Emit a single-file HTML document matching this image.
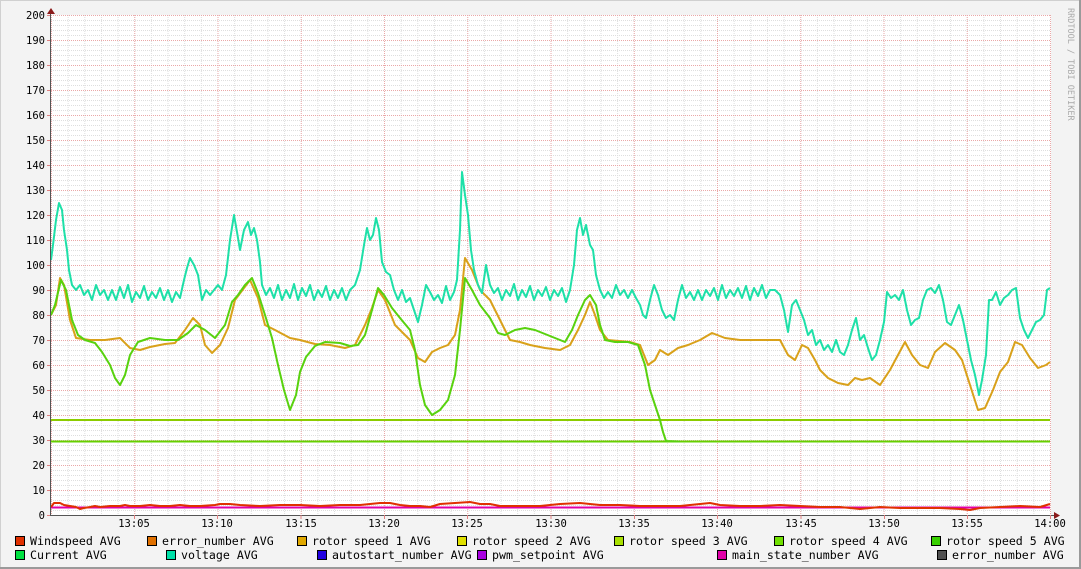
<!DOCTYPE html>
<html><head><meta charset="utf-8"><style>
html,body{margin:0;padding:0;background:#f3f3f3}
svg{display:block}
text{font-family:"DejaVu Sans Mono","Liberation Mono",monospace;fill:#000}
</style></head><body>
<svg width="1081" height="569" viewBox="0 0 1081 569" xmlns="http://www.w3.org/2000/svg">
<defs>
<pattern id="hmin" x="51" y="15" width="2" height="5" patternUnits="userSpaceOnUse"><rect x="0" y="0" width="1" height="1" fill="#dedede"/></pattern>
<pattern id="vmin" x="51" y="15" width="16.65" height="2" patternUnits="userSpaceOnUse"><rect x="0" y="0" width="1" height="1" fill="#dedede"/></pattern>
<pattern id="hmaj" x="51" y="15" width="2" height="25" patternUnits="userSpaceOnUse"><rect x="0" y="0" width="1" height="1" fill="#eaa8a8"/></pattern>
<pattern id="vmaj" x="51" y="15" width="83.25" height="2" patternUnits="userSpaceOnUse"><rect x="0" y="0" width="1" height="1" fill="#eaa8a8"/></pattern>
</defs>
<rect x="0" y="0" width="1081" height="569" fill="#f3f3f3"/>
<rect x="0.5" y="0.5" width="1080" height="568" fill="none" stroke="#d0d0d0"/>
<rect x="1079" y="0" width="2" height="569" fill="#9a9a9a"/>
<rect x="0" y="567" width="1081" height="2" fill="#9a9a9a"/>
<rect x="51" y="15" width="1000" height="500" fill="#fff"/>
<rect x="51" y="15" width="1000" height="500" fill="url(#hmin)"/>
<rect x="51" y="15" width="1000" height="500" fill="url(#vmin)"/>
<rect x="51" y="15" width="1000" height="500" fill="url(#hmaj)"/>
<rect x="51" y="15" width="1000" height="500" fill="url(#vmaj)"/>
<g stroke="#e08080" stroke-width="1">
<path d="M47 15.5h4M47 40.5h4M47 65.5h4M47 90.5h4M47 115.5h4M47 140.5h4M47 165.5h4M47 190.5h4M47 215.5h4M47 240.5h4M47 265.5h4M47 290.5h4M47 315.5h4M47 340.5h4M47 365.5h4M47 390.5h4M47 415.5h4M47 440.5h4M47 465.5h4M47 490.5h4M47 515.5h4"/>
</g>
<line x1="51" y1="420" x2="1050" y2="420" stroke="#8ccc00" stroke-width="2"/>
<line x1="51" y1="441.5" x2="1050" y2="441.5" stroke="#66d000" stroke-width="2"/>
<g fill="none" stroke-width="2" stroke-linejoin="round">
<polyline stroke="#d9a11a" points="51,315 56,305 60,278 64,285 70,320 76,338 90,340 105,340 120,338 130,348 140,350 150,347 165,344 175,343 185,330 193,318 200,325 205,345 212,353 220,345 228,328 235,300 241,292 250,280 258,298 265,325 275,330 290,338 300,340 315,344 330,345 345,348 355,345 365,325 372,308 378,290 385,300 395,325 410,340 418,358 425,362 432,352 440,348 448,345 455,335 460,310 465,258 472,270 480,290 490,300 500,320 510,340 520,342 530,345 545,348 560,350 570,345 578,330 585,315 590,302 595,315 600,330 608,340 630,342 640,345 648,365 655,360 660,350 668,355 678,348 688,345 700,340 712,333 725,338 740,340 760,340 780,340 788,355 795,360 802,345 808,348 815,360 820,370 828,378 838,383 848,385 855,378 862,380 870,378 880,385 890,370 898,355 905,342 912,355 920,365 928,368 935,352 945,343 955,350 962,360 970,385 978,410 985,408 993,390 1000,372 1008,362 1015,342 1022,345 1030,358 1038,368 1046,365 1050,362"/>
<polyline stroke="#58d20e" points="51,315 55,305 61,280 66,290 72,320 78,335 85,340 95,343 102,352 110,365 115,378 120,385 125,375 130,355 138,342 150,338 165,340 178,340 188,333 196,325 205,330 215,338 225,325 232,302 238,295 245,285 252,278 258,293 265,315 272,338 278,365 284,390 290,410 296,395 300,372 306,357 315,346 325,342 340,343 350,346 358,345 365,335 372,310 378,288 384,295 392,308 400,318 410,330 415,350 420,385 425,405 432,415 440,410 448,400 455,375 460,330 465,278 472,290 480,305 490,318 498,333 505,335 515,330 525,328 535,330 545,334 555,338 565,342 572,330 578,315 585,300 590,295 596,305 600,325 605,340 615,342 628,342 638,345 645,365 650,390 655,405 660,420 663,432 666,441 680,441.5"/>
<polyline stroke="#1ee0a8" points="51,260 53,245 56,220 59,203 62,210 64,230 67,250 69,270 72,285 76,290 80,285 84,295 88,290 92,300 96,285 100,295 104,290 108,300 112,290 116,300 120,287 124,298 128,285 132,302 136,292 140,298 144,286 148,300 152,292 156,298 160,288 164,300 168,290 172,302 176,292 180,298 184,280 187,268 190,258 194,265 198,275 202,300 206,290 210,295 214,290 218,285 222,290 226,275 230,240 234,215 237,232 240,250 244,230 248,222 251,235 254,228 257,240 260,262 262,285 266,295 270,288 274,298 278,285 282,300 286,290 290,298 294,284 298,300 302,288 306,296 310,285 314,300 318,290 322,297 326,286 330,300 334,290 338,298 342,288 346,300 350,290 355,285 360,270 364,245 367,228 370,240 373,235 376,218 379,230 382,262 386,272 390,275 394,290 398,300 402,290 406,302 410,298 414,310 418,322 422,305 426,285 430,292 434,300 438,295 442,303 446,286 450,300 454,292 457,280 460,230 462,172 465,195 468,215 471,250 474,270 478,285 482,293 486,265 490,285 494,293 498,288 502,300 506,290 510,296 514,284 518,300 522,290 526,297 530,286 534,300 538,290 542,296 546,287 550,300 554,290 558,296 562,288 566,302 570,290 574,265 577,230 580,218 583,235 586,225 590,245 593,250 596,275 600,290 604,298 608,292 612,298 616,285 620,295 624,290 628,298 632,290 636,298 640,305 643,315 646,318 650,300 654,285 658,295 662,310 666,318 670,315 674,320 678,300 682,285 686,298 690,292 694,300 698,290 702,300 706,290 710,296 714,288 718,300 722,285 726,298 730,290 734,296 738,288 742,298 746,286 750,300 754,288 758,296 762,285 766,298 770,290 775,290 780,295 784,310 788,332 792,305 796,300 800,310 804,320 808,335 812,330 816,345 820,340 824,350 828,345 832,352 836,340 840,352 844,355 848,345 852,330 856,318 860,340 864,335 868,348 872,360 876,355 880,340 884,322 887,292 891,298 895,295 899,300 903,290 907,310 911,325 915,320 919,318 923,300 927,290 931,288 935,293 939,285 943,300 947,322 951,325 955,315 959,305 963,320 967,340 971,360 975,375 979,395 982,380 986,355 989,300 992,300 996,292 1000,305 1004,298 1008,295 1012,290 1016,288 1020,318 1024,330 1028,338 1032,330 1036,322 1040,320 1044,315 1047,290 1050,288"/>
<line x1="51" y1="507.5" x2="1050" y2="507.5" stroke="#e000a8"/>
<polyline stroke="#e03000" points="51,507 54,503 60,503 64,505 70,506 76,507 80,509 84,508 90,507 95,506 100,507 110,506 120,506 125,505 130,506 140,506 150,505 160,506 170,506 180,505 190,506 200,506 215,505 220,504 230,504 240,505 260,506 280,505 300,505 320,506 340,505 360,505 380,503 390,503 400,505 410,506 420,506 430,507 440,504 455,503 470,502 480,504 490,504 500,506 520,506 540,506 560,504 580,503 600,505 620,505 640,506 660,506 680,506 700,504 710,503 720,505 740,506 760,506 780,505 800,506 820,507 840,507 860,509 870,508 880,507 900,508 920,508 940,508 960,509 970,510 980,508 1000,507 1020,506 1040,507 1050,504"/>
</g>
<line x1="50.5" y1="10" x2="50.5" y2="516" stroke="#555" stroke-width="1"/>
<line x1="50" y1="515.5" x2="1056" y2="515.5" stroke="#555" stroke-width="1"/>
<path d="M47 14L51 8L55 14Z" fill="#8b1a1a"/>
<path d="M1054 512L1060 515.5L1054 519Z" fill="#8b1a1a"/>
<g stroke="#e08080"><path d="M134.5 515v4M217.5 515v4M301 515v4M384.5 515v4M467.5 515v4M551 515v4M634.5 515v4M717.5 515v4M801 515v4M884.5 515v4M967.5 515v4M1050.5 515v4"/></g>
<g font-size="10.5" text-anchor="end">
<text x="45" y="19">200</text><text x="45" y="44">190</text><text x="45" y="69">180</text><text x="45" y="94">170</text><text x="45" y="119">160</text><text x="45" y="144">150</text><text x="45" y="169">140</text><text x="45" y="194">130</text><text x="45" y="219">120</text><text x="45" y="244">110</text><text x="45" y="269">100</text><text x="45" y="294">90</text><text x="45" y="319">80</text><text x="45" y="344">70</text><text x="45" y="369">60</text><text x="45" y="394">50</text><text x="45" y="419">40</text><text x="45" y="444">30</text><text x="45" y="469">20</text><text x="45" y="494">10</text><text x="45" y="519">0</text>
</g>
<g font-size="10.5" text-anchor="middle">
<text x="134" y="527">13:05</text><text x="217" y="527">13:10</text><text x="301" y="527">13:15</text><text x="384" y="527">13:20</text><text x="467" y="527">13:25</text><text x="551" y="527">13:30</text><text x="634" y="527">13:35</text><text x="717" y="527">13:40</text><text x="801" y="527">13:45</text><text x="884" y="527">13:50</text><text x="967" y="527">13:55</text><text x="1050" y="527">14:00</text>
</g>
<text x="1068" y="8" font-size="8.5" style="fill:#aaa" transform="rotate(90 1068 8)">RRDTOOL / TOBI OETIKER</text>
<g stroke="#000" stroke-width="1">
<rect x="15.5" y="536.5" width="9" height="9" fill="#e03000"/>
<rect x="147.5" y="536.5" width="9" height="9" fill="#e07000"/>
<rect x="297.5" y="536.5" width="9" height="9" fill="#e0a800"/>
<rect x="457.5" y="536.5" width="9" height="9" fill="#e0e000"/>
<rect x="614.5" y="536.5" width="9" height="9" fill="#a8e000"/>
<rect x="774.5" y="536.5" width="9" height="9" fill="#70e000"/>
<rect x="931.5" y="536.5" width="9" height="9" fill="#38d000"/>
<rect x="15.5" y="550.5" width="9" height="9" fill="#00e040"/>
<rect x="166.5" y="550.5" width="9" height="9" fill="#00e0a8"/>
<rect x="317.5" y="550.5" width="9" height="9" fill="#2000e0"/>
<rect x="477.5" y="550.5" width="9" height="9" fill="#a800e0"/>
<rect x="717.5" y="550.5" width="9" height="9" fill="#e000a8"/>
<rect x="937.5" y="550.5" width="9" height="9" fill="#505050"/>
</g>
<g font-size="11.6">
<text x="30" y="545">Windspeed AVG</text>
<text x="162" y="545">error_number AVG</text>
<text x="312" y="545">rotor speed 1 AVG</text>
<text x="472" y="545">rotor speed 2 AVG</text>
<text x="629" y="545">rotor speed 3 AVG</text>
<text x="789" y="545">rotor speed 4 AVG</text>
<text x="946" y="545">rotor speed 5 AVG</text>
<text x="30" y="559">Current AVG</text>
<text x="181" y="559">voltage AVG</text>
<text x="332" y="559">autostart_number AVG</text>
<text x="492" y="559">pwm_setpoint AVG</text>
<text x="732" y="559">main_state_number AVG</text>
<text x="952" y="559">error_number AVG</text>
</g>
</svg>
</body></html>
